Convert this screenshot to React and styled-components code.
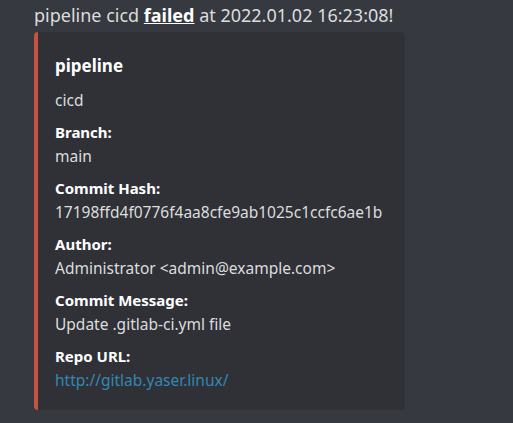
import React from 'react';
import styled, { createGlobalStyle } from 'styled-components';

const GlobalStyle = createGlobalStyle`
  html, body {
    margin: 0;
    padding: 0;
    background: #36393f;
  }
  body {
    font-family: "Noto Sans", "Open Sans", sans-serif;
    width: 513px;
    height: 423px;
    overflow: hidden;
  }
`;

const Message = styled.div`
  padding: 3px 0 0 34px;
`;

const Content = styled.div`
  color: #dcddde;
  font-size: 18px;
  line-height: 24px;
  white-space: nowrap;
`;

const Strong = styled.strong`
  color: #fff;
  text-decoration: underline;
  font-weight: 700;
`;

const Embed = styled.div`
  margin-top: 5px;
  width: 371px;
  box-sizing: border-box;
  background: #2f3136;
  border-left: 4px solid #c4533f;
  border-radius: 4px;
  padding: 22px 16px 18px 17px;
`;

const Title = styled.div`
  color: #fff;
  font-weight: 700;
  font-size: 17px;
  line-height: 24px;
`;

const Description = styled.div`
  color: #dcddde;
  font-size: 15.5px;
  line-height: 24px;
  margin-top: 10px;
`;

const Fields = styled.div`
  display: grid;
  gap: 8px;
  margin-top: 8px;
`;

const FieldName = styled.div`
  color: #fff;
  font-weight: 700;
  font-size: 15px;
  line-height: 24px;
`;

const FieldValue = styled.div`
  color: #dcddde;
  font-size: 15.5px;
  line-height: 24px;
  white-space: nowrap;
`;

const Link = styled.a`
  color: #3487b3;
  text-decoration: none;
`;

const fields = [
  ['Branch:', 'main'],
  ['Commit Hash:', '17198ffd4f0776f4aa8cfe9ab1025c1ccfc6ae1b'],
  ['Author:', 'Administrator <admin@example.com>'],
  ['Commit Message:', 'Update .gitlab-ci.yml file'],
];

export default function App() {
  return (
    <>
      <GlobalStyle />
      <Message>
        <Content>
          pipeline cicd <Strong>failed</Strong> at 2022.01.02 16:23:08!
        </Content>
        <Embed>
          <Title>pipeline</Title>
          <Description>cicd</Description>
          <Fields>
            {fields.map(([name, value]) => (
              <div key={name}>
                <FieldName>{name}</FieldName>
                <FieldValue>{value}</FieldValue>
              </div>
            ))}
            <div>
              <FieldName>Repo URL:</FieldName>
              <FieldValue>
                <Link href="#">http://gitlab.yaser.linux/</Link>
              </FieldValue>
            </div>
          </Fields>
        </Embed>
      </Message>
    </>
  );
}
